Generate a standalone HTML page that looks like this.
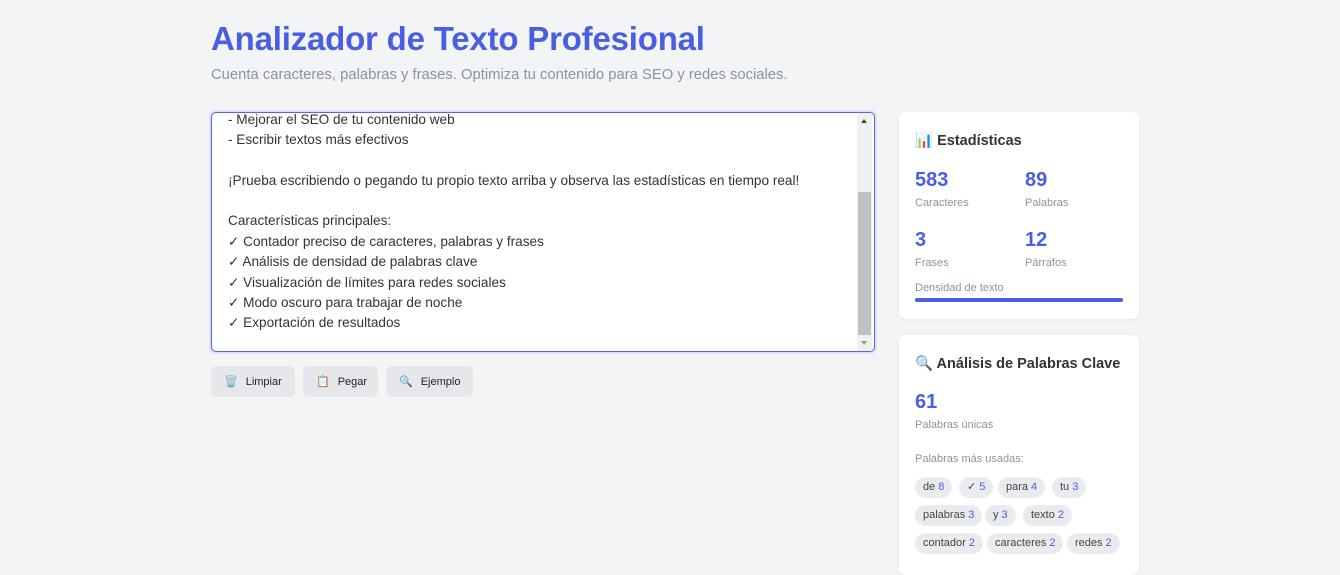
<!DOCTYPE html>
<html><head><meta charset="utf-8"><style>
*{margin:0;padding:0;box-sizing:border-box}
body{width:1340px;height:558px;overflow:hidden;background:#f3f4f6;font-family:"Liberation Sans",sans-serif;position:relative;color:#333}
.abs{position:absolute}
h1{position:absolute;left:211px;top:20px;font-size:33px;font-weight:bold;color:#4a5ee2;letter-spacing:-0.2px}
.sub{left:211px;top:67px;font-size:14.8px;color:#8a93a3}
.ta{left:211px;top:112px;width:664px;height:240px;background:#fff;border:1px solid #5567e0;border-radius:5px;overflow:hidden;box-shadow:0 0 0 2px rgba(85,103,224,.12)}
.ta .l{position:absolute;left:16px;font-size:13.6px;color:#333;white-space:nowrap}
.sb{position:absolute;right:2px;top:0;width:15px;height:238px;background:#f0f0f0}
.thumb{position:absolute;left:1px;top:79px;width:13px;height:143px;background:#c1c1c1}
.btn{top:366px;height:31px;background:#e5e7eb;border-radius:6px;font-size:11px;color:#222;display:flex;align-items:center;padding-left:13px;gap:8px}
.card{left:899px;width:240px;background:#fff;border-radius:7px;box-shadow:0 1px 4px rgba(0,0,0,.06)}
.ct{position:absolute;left:16px;font-size:14.5px;font-weight:bold;color:#333;white-space:nowrap}
.num{position:absolute;font-size:20px;font-weight:bold;color:#4a5ee2}
.lab{position:absolute;font-size:11px;color:#8a93a3}
.tag{position:absolute;height:21px;background:#e9ebef;border-radius:11px;font-size:11px;color:#444;padding:0 8px;line-height:21px;white-space:nowrap}
.tag b{color:#4a5ee2;font-weight:normal;margin-left:3px}
</style></head><body>
<h1>Analizador de Texto Profesional</h1>
<div class="abs sub">Cuenta caracteres, palabras y frases. Optimiza tu contenido para SEO y redes sociales.</div>
<div class="abs ta">
<div class="l" style="top:-1px">- Mejorar el SEO de tu contenido web</div>
<div class="l" style="top:19px">- Escribir textos más efectivos</div>
<div class="l" style="top:60px">¡Prueba escribiendo o pegando tu propio texto arriba y observa las estadísticas en tiempo real!</div>
<div class="l" style="top:100px">Características principales:</div>
<div class="l" style="top:121px">✓ Contador preciso de caracteres, palabras y frases</div>
<div class="l" style="top:141px">✓ Análisis de densidad de palabras clave</div>
<div class="l" style="top:162px">✓ Visualización de límites para redes sociales</div>
<div class="l" style="top:182px">✓ Modo oscuro para trabajar de noche</div>
<div class="l" style="top:202px">✓ Exportación de resultados</div>
<div class="sb"><div class="thumb"></div>
<div style="position:absolute;left:4px;top:6px;border-left:3.5px solid transparent;border-right:3.5px solid transparent;border-bottom:4px solid #444"></div>
<div style="position:absolute;left:4px;top:228px;border-left:3.5px solid transparent;border-right:3.5px solid transparent;border-top:4px solid #999"></div>
</div>
</div>
<div class="abs btn" style="left:211px;width:84px">🗑️<span>Limpiar</span></div>
<div class="abs btn" style="left:303px;width:75px">📋<span>Pegar</span></div>
<div class="abs btn" style="left:386px;width:87px">🔍<span>Ejemplo</span></div>

<div class="abs card" style="top:112px;height:207px">
<div class="ct" style="top:20px">📊 Estadísticas</div>
<div class="num" style="left:16px;top:57px">583</div><div class="lab" style="left:16px;top:85px">Caracteres</div>
<div class="num" style="left:126px;top:57px">89</div><div class="lab" style="left:126px;top:85px">Palabras</div>
<div class="num" style="left:16px;top:117px">3</div><div class="lab" style="left:16px;top:145px">Frases</div>
<div class="num" style="left:126px;top:117px">12</div><div class="lab" style="left:126px;top:145px">Párrafos</div>
<div class="lab" style="left:16px;top:170px">Densidad de texto</div>
<div style="position:absolute;left:16px;top:186px;width:208px;height:4px;border-radius:2px;background:#4a5ee2"></div>
</div>
<div class="abs card" style="top:335px;height:240px">
<div class="ct" style="top:20px">🔍 Análisis de Palabras Clave</div>
<div class="num" style="left:16px;top:56px">61</div><div class="lab" style="left:16px;top:84px">Palabras únicas</div>
<div class="lab" style="left:16px;top:118px">Palabras más usadas:</div>
<div class="tag" style="left:16px;top:142px">de<b>8</b></div>
<div class="tag" style="left:60px;top:142px">✓<b>5</b></div>
<div class="tag" style="left:99px;top:142px">para<b>4</b></div>
<div class="tag" style="left:153px;top:142px">tu<b>3</b></div>
<div class="tag" style="left:16px;top:170px">palabras<b>3</b></div>
<div class="tag" style="left:86px;top:170px">y<b>3</b></div>
<div class="tag" style="left:124px;top:170px">texto<b>2</b></div>
<div class="tag" style="left:16px;top:198px">contador<b>2</b></div>
<div class="tag" style="left:88px;top:198px">caracteres<b>2</b></div>
<div class="tag" style="left:168px;top:198px">redes<b>2</b></div>
</div>
</body></html>
